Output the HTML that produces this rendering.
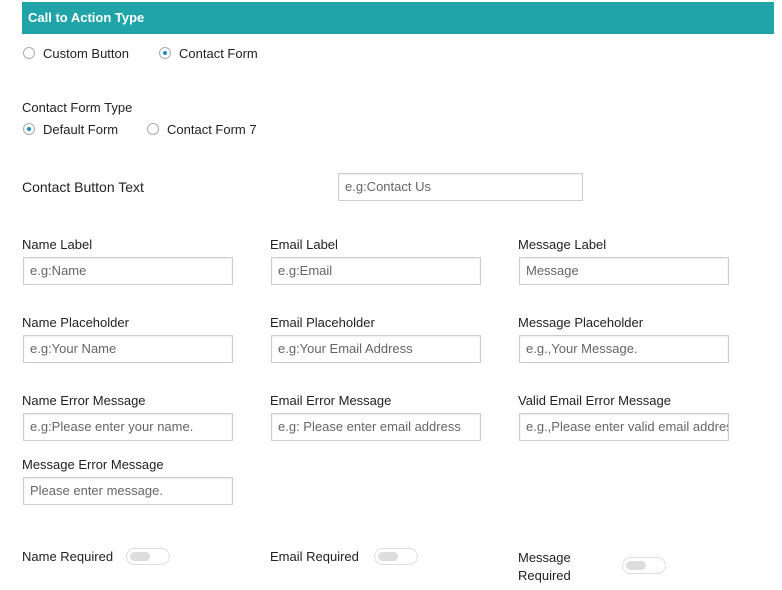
<!DOCTYPE html><html><head><style>
body{margin:0;width:782px;height:590px;background:#fff;font-family:"Liberation Sans",sans-serif;font-size:13px;color:#222;position:relative;overflow:hidden}
.a{position:absolute;white-space:nowrap}
.hdr{position:absolute;left:22px;top:2px;width:752px;height:32px;background:#21a4a8;color:#fff;font-weight:bold;font-size:13px;line-height:32px;box-sizing:border-box;padding-left:6px}
.r{position:absolute;width:12px;height:12px;border:1px solid #aaa;border-radius:50%;box-sizing:border-box;background:#fff}
.r.on::after{content:"";position:absolute;left:3px;top:3px;width:4px;height:4px;border-radius:50%;background:#1e8cbe}
.in{position:absolute;width:210px;height:28px;border:1px solid #ccc;box-sizing:border-box;padding-left:6px;line-height:26px;color:#666;font-size:13px;overflow:hidden;white-space:nowrap;box-shadow:inset 0 1px 2px rgba(0,0,0,.07)}
.t{position:absolute;width:44px;height:17px;border:1px solid #ddd;border-radius:9px;box-sizing:border-box}
.t::after{content:"";position:absolute;left:3px;top:3px;width:20px;height:9px;border-radius:5px;background:#ddd}
</style></head><body>
<div class="hdr">Call to Action Type</div>
<div class="r" style="left:23px;top:47px"></div><div class="a" style="left:43px;top:46px">Custom Button</div>
<div class="r on" style="left:159px;top:47px"></div><div class="a" style="left:179px;top:46px">Contact Form</div>
<div class="a" style="left:22px;top:100px">Contact Form Type</div>
<div class="r on" style="left:23px;top:123px"></div><div class="a" style="left:43px;top:122px">Default Form</div>
<div class="r" style="left:147px;top:123px"></div><div class="a" style="left:167px;top:122px">Contact Form 7</div>
<div class="a" style="left:22px;top:179px;font-size:14px">Contact Button Text</div>
<div class="in" style="left:338px;top:173px;width:245px">e.g:Contact Us</div>

<div class="a" style="left:22px;top:237px">Name Label</div>
<div class="a" style="left:270px;top:237px">Email Label</div>
<div class="a" style="left:518px;top:237px">Message Label</div>
<div class="in" style="left:23px;top:257px">e.g:Name</div>
<div class="in" style="left:271px;top:257px">e.g:Email</div>
<div class="in" style="left:519px;top:257px">Message</div>

<div class="a" style="left:22px;top:315px">Name Placeholder</div>
<div class="a" style="left:270px;top:315px">Email Placeholder</div>
<div class="a" style="left:518px;top:315px">Message Placeholder</div>
<div class="in" style="left:23px;top:335px">e.g:Your Name</div>
<div class="in" style="left:271px;top:335px">e.g:Your Email Address</div>
<div class="in" style="left:519px;top:335px">e.g.,Your Message.</div>

<div class="a" style="left:22px;top:393px">Name Error Message</div>
<div class="a" style="left:270px;top:393px">Email Error Message</div>
<div class="a" style="left:518px;top:393px">Valid Email Error Message</div>
<div class="in" style="left:23px;top:413px">e.g:Please enter your name.</div>
<div class="in" style="left:271px;top:413px">e.g: Please enter email address</div>
<div class="in" style="left:519px;top:413px">e.g.,Please enter valid email address</div>

<div class="a" style="left:22px;top:457px">Message Error Message</div>
<div class="in" style="left:23px;top:477px">Please enter message.</div>

<div class="a" style="left:22px;top:549px">Name Required</div><div class="t" style="left:126px;top:548px"></div>
<div class="a" style="left:270px;top:549px">Email Required</div><div class="t" style="left:374px;top:548px"></div>
<div class="a" style="left:518px;top:549px;line-height:18px;white-space:normal;width:70px">Message Required</div><div class="t" style="left:622px;top:557px"></div>
</body></html>
